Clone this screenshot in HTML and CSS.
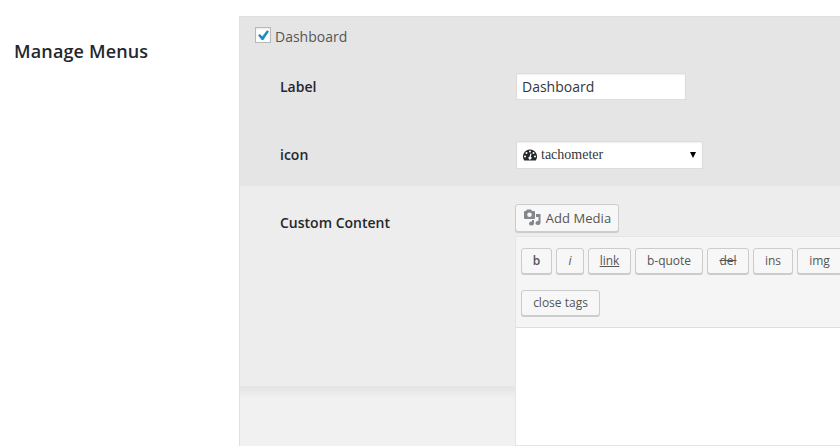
FILE: index.html
```html
<!DOCTYPE html>
<html lang="en">
<head>
<meta charset="utf-8">
<title>Manage Menus</title>
<link rel="stylesheet" href="styles.css">
</head>
<body>
<div class="page">
  <h3 class="page-title">Manage Menus</h3>
  <section class="panel">
    <div class="section general">
      <label class="toggle"><span class="checkbox"><svg viewBox="0 0 14 14" width="14" height="14"><path d="M2 7.300L4 5.900l2.200 2.700L11 2.200l2 1.300-5.700 8.500H5.700z" fill="#1e8cbe"/></svg></span><span class="toggle-text">Dashboard</span></label>
      <div class="field field-label"><span class="name">Label</span><div class="input">Dashboard</div></div>
      <div class="field field-icon"><span class="name">icon</span>
        <div class="select">
          <svg class="tach" viewBox="0 0 14 12" width="14" height="12"><path fill="#23282d" fill-rule="evenodd" d="M7 .5a7 7 0 0 0-5.900 10.700q.2.300.6.300h10.600q.400 0 .600-.300A7 7 0 0 0 7 .500zM2 6.500a1 1 0 1 0 0 2 1 1 0 0 0 0-2zM3.500 3a1 1 0 1 0 0 2 1 1 0 0 0 0-2zM7 1.500a1 1 0 1 0 0 2 1 1 0 0 0 0-2zM10.500 3a1 1 0 1 0 0 2 1 1 0 0 0 0-2zM12 6.500a1 1 0 1 0 0 2 1 1 0 0 0 0-2zM7.300 4.500l-.600 3a1.500 1.500 0 1 0 1.200.250l.600-3z"/></svg>
          <span class="select-text">tachometer</span>
          <svg class="arrow" viewBox="0 0 6 6" width="6" height="6"><path d="M0 0h6L3 6z"/></svg>
        </div>
      </div>
    </div>
    <div class="section content">
      <span class="name content-name">Custom Content</span>
      <div class="editor-wrap">
        <div class="btn media"><svg viewBox="0 0 18 18" width="18" height="18"><path fill="#82878c" fill-rule="evenodd" d="M1 2h2l1-1.500h4L9 2h2q1 0 1 1v6q0 1-1 1H2q-1 0-1-1V3q0-1 1-1zM6.500 3.500a2.300 2.300 0 1 0 0 4.600 2.300 2.300 0 0 0 0-4.600zM13 5h4.500v9a2.500 2 0 1 1-2-2V8H13zM9 11h2v3.500a2.500 2 0 1 1-2-2z"/></svg><span>Add Media</span></div>
        <div class="editor">
          <div class="toolbar">
            <div class="tools">
              <span class="btn tool w31"><b>b</b></span>
              <span class="btn tool w28"><i>i</i></span>
              <span class="btn tool w43"><u>link</u></span>
              <span class="btn tool w68">b-quote</span>
              <span class="btn tool w42"><s>del</s></span>
              <span class="btn tool w40">ins</span>
              <span class="btn tool w45">img</span>
            </div>
            <div class="tools"><span class="btn tool w79">close tags</span></div>
          </div>
          <div class="textarea"></div>
        </div>
      </div>
    </div>
    <div class="footer-shade"></div>
  </section>
</div>
</body>
</html>
```
FILE: styles.css
```css
* { box-sizing: border-box; }
html, body { margin: 0; height: 446px; overflow: hidden; }
body { background: #fff; font: 14px/20px "Open Sans", sans-serif; color: #555; }
svg { display: block; flex: none; }
.page { display: grid; grid-template-columns: 225px 601px; height: 446px; padding: 16px 0 0 14px; }
.page-title { margin: 23px 0 0; font-size: 18px; line-height: 24px; font-weight: 600; letter-spacing: .14px; color: #23282d; white-space: nowrap; }
.panel { height: 430px; border: 1px solid #dfdfdf; border-width: 1px 0 0 1px; background: #f1f1f1; }
.general { height: 169px; padding: 10px 0 0 15px; background: #e5e5e5; }
.toggle { display: flex; gap: 4px; height: 20px; }
.checkbox { width: 16px; height: 16px; border: 1px solid #b4b9be; background: #fff; box-shadow: inset 0 1px 2px rgba(0,0,0,.1); }
.toggle-text { line-height: 20px; }
.name { font-weight: 600; color: #23282d; line-height: 20px; }
.field { display: grid; grid-template-columns: 236px auto; padding-left: 25px; justify-content: start; align-items: center; }
.field-label { margin-top: 26px; height: 27px; }
.field-icon { margin-top: 41px; height: 28px; }
.input, .select { background: #fff; border: 1px solid #ddd; box-shadow: inset 0 1px 2px rgba(0,0,0,.07); color: #32373c; }
.input { width: 170px; height: 27px; padding: 0 5px; line-height: 26px; }
.select { display: flex; align-items: center; width: 187px; height: 28px; padding: 0 6px; font: 14px/20px "Liberation Serif", serif; }
.select-text { margin-left: 4px; }
.arrow { margin-left: auto; }
.content { display: grid; grid-template-columns: 275px 1fr; height: 200px; background: #ededed; }
.content-name { padding: 27px 0 0 40px; }
.editor-wrap { padding-top: 18px; height: 260px; }
.btn { display: flex; align-items: center; justify-content: center; border: 1px solid #ccc; border-radius: 3px; background: #f7f7f7; box-shadow: 0 1px 0 #ccc; white-space: nowrap; }
.media { width: 104px; height: 28px; gap: 5px; font-size: 13px; letter-spacing: .05px; }
.editor { height: 210px; margin-top: 4px; border: 1px solid #e5e5e5; border-right: 0; background: #fff; }
.toolbar { display: grid; gap: 16px; height: 91px; padding: 11px 0 0 5px; align-content: start; background: #f5f5f5; border-bottom: 1px solid #dedede; }
.tools { display: flex; gap: 4px; }
.tool { flex: none; height: 26px; font-size: 12px; line-height: 24px; }
.tool b { font-weight: 600; }
.w28 { width: 28px; }
.w31 { width: 31px; }
.w40 { width: 40px; }
.w42 { width: 42px; }
.w43 { width: 43px; }
.w45 { width: 45px; }
.w68 { width: 68px; }
.w79 { width: 79px; }
.footer-shade { width: 275px; height: 13px; background: linear-gradient(#e4e4e4, #f1f1f1); }
```
